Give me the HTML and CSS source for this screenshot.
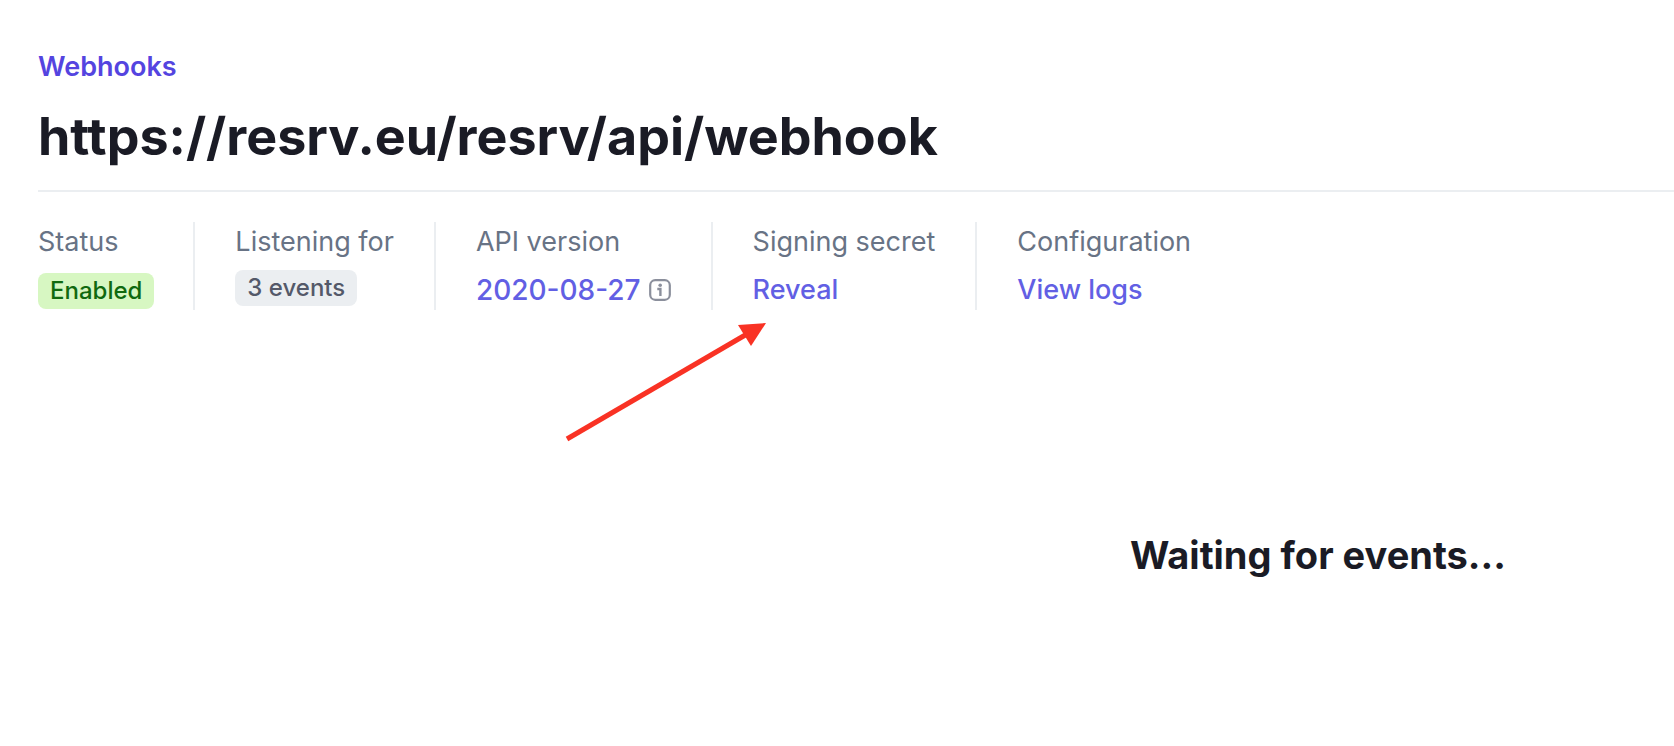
FILE: index.html
```
<!DOCTYPE html>
<html lang="en">
<head>
<meta charset="utf-8">
<title>Webhooks</title>
<link rel="stylesheet" href="styles.css">
</head>
<body>
<main class="page">
  <header class="header">
    <a class="breadcrumb" href="#webhooks">Webhooks</a>
    <h1 class="title">https://resrv.eu/resrv/api/webhook</h1>
  </header>
  <div class="summary">
    <section class="item item-status">
      <span class="label">Status</span>
      <span class="badge badge-enabled">Enabled</span>
    </section>
    <section class="item">
      <span class="label">Listening for</span>
      <span class="badge badge-events">3 events</span>
    </section>
    <section class="item">
      <span class="label">API version</span>
      <span class="value"><a class="link version" href="#version">2020-08-27</a>
        <svg class="info" viewBox="0 0 22 22" aria-hidden="true"><rect x="1.2" y="1.2" width="19.6" height="19.6" rx="5" fill="none" stroke="currentColor" stroke-width="2.2"/><circle cx="11.2" cy="6.2" r="1.8" fill="currentColor"/><path d="M8.3 10H11.4V17" fill="none" stroke="currentColor" stroke-width="2.4"/></svg>
      </span>
    </section>
    <section class="item">
      <span class="label">Signing secret</span>
      <button class="link" type="button">Reveal</button>
      <svg class="arrow" viewBox="0 0 204 122" aria-hidden="true"><path d="M2 117L182 12" stroke="#f93224" stroke-width="5"/><path d="M201 1L173 3L186 24Z" fill="#f93224"/></svg>
    </section>
    <section class="item">
      <span class="label">Configuration</span>
      <a class="link" href="#logs">View logs</a>
    </section>
  </div>
  <div class="waiting"><h2 class="waiting-title">Waiting for events...</h2></div>
</main>
</body>
</html>
```
FILE: styles.css
```
* { box-sizing: border-box; }
body { margin: 0; background: #fff; color: #1a1b25; font-family: Inter, "Liberation Sans", sans-serif; }
.page { padding: 49px 0 0 38px; }
.header { border-bottom: 2px solid #ebeef1; padding-bottom: 20px; }
.breadcrumb { display: block; width: max-content; font-size: 27px; line-height: 36px; font-weight: 600; color: #5444e0; text-decoration: none; }
.title { margin: 19px 0 0; font-size: 52px; line-height: 66px; font-weight: 700; }
.summary { display: flex; margin-top: 30px; }
.item { position: relative; display: flex; flex-direction: column; align-items: flex-start; gap: 8px; min-height: 88px; padding: 0 40px; border-right: 2px solid #ebeef1; }
.item-status { gap: 11px; padding: 0 39px 0 0; }
.item:last-child { border-right: 0; }
.label { font-size: 27px; line-height: 40px; color: #687385; white-space: nowrap; }
.link { padding: 0; border: 0; background: none; font-family: inherit; font-size: 27px; line-height: 40px; font-weight: 500; color: #625fe4; text-decoration: none; white-space: nowrap; }
.version { font-size: 28px; }
.value { display: flex; align-items: center; gap: 8px; }
.badge { padding: 0 12px; border-radius: 8px; font-size: 24px; line-height: 36px; font-weight: 500; white-space: nowrap; }
.badge-enabled { background: #d7f7c2; color: #10690f; }
.badge-events { background: #ebeef1; color: #545969; }
.info { width: 22px; height: 22px; color: #8b8f9c; }
.arrow { position: absolute; left: -148px; top: 100px; width: 204px; height: 122px; }
.waiting { display: flex; justify-content: center; padding: 219px 0 0 924px; }
.waiting-title { margin: 0; font-size: 38px; line-height: 52px; font-weight: 700; }
```
